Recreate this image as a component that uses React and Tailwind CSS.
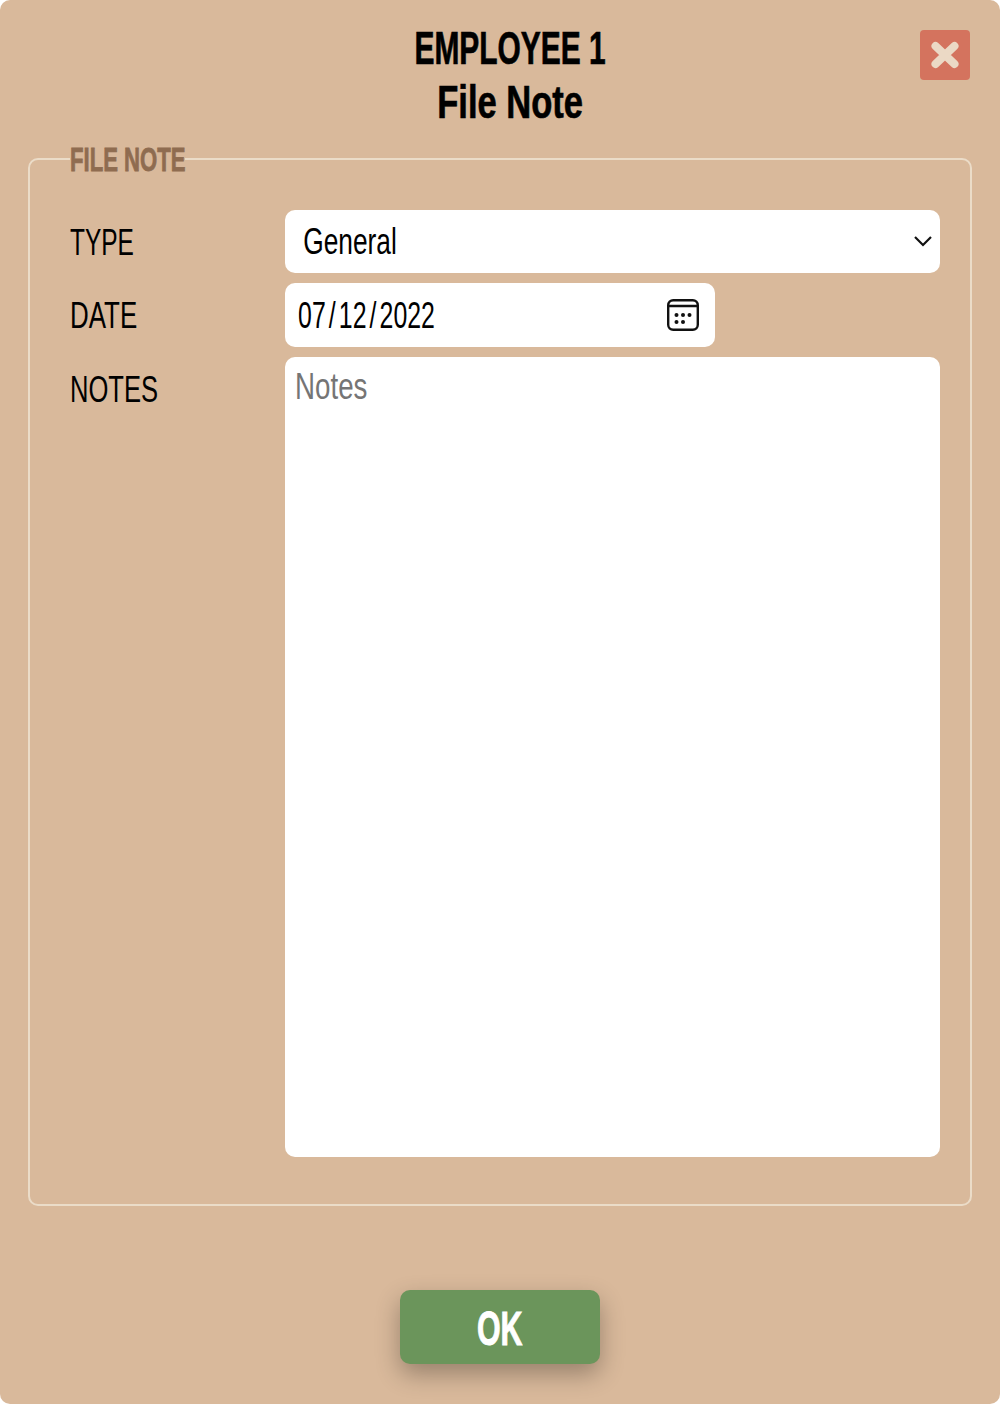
import React from 'react';

const font = { fontFamily: '"Liberation Sans", Arial, sans-serif' };

const Row = ({ label, children }) => (
    <div className="flex">
        <div className="h-[63px] w-[215px] shrink-0 text-[36px] leading-[65px] text-black whitespace-nowrap">{label}</div>
        {children}
    </div>
);

export default function App() {
    return (
        <div className="bg-white h-[1404px] w-[1000px] overflow-hidden" style={font}>
            <div className="relative h-full rounded-[10px] bg-[#d9b99b] px-[28px] pt-[21px]">
                <button className="absolute right-[30px] top-[30px] flex h-[50px] w-[50px] items-center justify-center rounded-[4px] bg-[#d4735e]">
                    <svg width="30" height="28" viewBox="0 0 30 28">
                        <path d="M5.5 5 L24.5 23 M24.5 5 L5.5 23" stroke="#ebd9c5" strokeWidth="8" strokeLinecap="round" />
                    </svg>
                </button>

                <h1 className="pl-[20px] text-center text-[46px] font-bold leading-[54px] text-black whitespace-nowrap [-webkit-text-stroke:0.7px_#000]">
                    <span className="inline-block scale-x-[0.65]">EMPLOYEE 1</span><br />
                    <span className="inline-block scale-x-[0.75]">File Note</span>
                </h1>

                <fieldset className="mt-[18px] h-[1059px] w-[944px] min-w-0 rounded-[10px] border-2 border-[#ebdcc8] pl-[40px] pr-[30px] pt-[39px]">
                    <legend className="w-[115px] text-[34px] font-bold leading-[24px] text-[#8f6c50] whitespace-nowrap [-webkit-text-stroke:0.8px_#8f6c50]">
                        <span className="inline-block origin-left scale-x-[0.65]">FILE NOTE</span>
                    </legend>
                    <div className="flex flex-col gap-[10px]">
                        <Row label={<span className="inline-block origin-left scale-x-[0.68]">TYPE</span>}>
                            <div className="relative h-[63px] w-[655px] overflow-hidden rounded-[10px] bg-white">
                                <select className="h-[63px] w-[897px] max-w-none origin-left scale-x-[0.73] appearance-none bg-transparent pl-[25px] text-[36px] text-black outline-none">
                                    <option>General</option>
                                </select>
                                <svg className="absolute right-[8px] top-[24px]" width="18" height="14" viewBox="0 0 18 14" fill="none">
                                    <path d="M1 3 L9 11 L17 3" stroke="#111" strokeWidth="2.2" />
                                </svg>
                            </div>
                        </Row>
                        <Row label={<span className="inline-block origin-left scale-x-[0.72]">DATE</span>}>
                            <div className="relative h-[64px] w-[430px] overflow-hidden rounded-[10px] bg-white">
                                <input readOnly value="07 / 12 / 2022" className="h-[64px] w-[620px] max-w-none origin-left scale-x-[0.69] bg-transparent pl-[19px] pt-[2px] text-[36px] text-black outline-none [word-spacing:-5.5px]" />
                                <svg className="absolute left-[382px] top-[16px]" width="32" height="32" viewBox="0 0 32 32" fill="none">
                                    <rect x="1.2" y="1.2" width="29.6" height="29.6" rx="5" stroke="#111" strokeWidth="2.4" />
                                    <path d="M1.2 7 H30.8" stroke="#111" strokeWidth="2.4" />
                                    <g fill="#111">
                                        <circle cx="9.5" cy="16" r="2" /><circle cx="16" cy="16" r="2" /><circle cx="22.5" cy="16" r="2" />
                                        <circle cx="9.5" cy="23" r="2" /><circle cx="16" cy="23" r="2" />
                                    </g>
                                </svg>
                            </div>
                        </Row>
                        <Row label={<span className="inline-block origin-left scale-x-[0.71]">NOTES</span>}>
                            <div className="h-[800px] w-[655px] overflow-hidden rounded-[10px] bg-white">
                                <textarea placeholder="Notes" className="h-[800px] w-[851px] max-w-none origin-left scale-x-[0.77] resize-none bg-transparent px-[13px] py-[6px] text-[36px] leading-[48px] outline-none placeholder:text-[#757575]" />
                            </div>
                        </Row>
                    </div>
                </fieldset>

                <div className="mt-[84px] flex justify-center">
                    <button className="h-[74px] w-[200px] rounded-[10px] bg-[#6b955b] pt-[2px] text-[49px] font-bold text-white shadow-[0_10px_24px_rgba(0,0,0,0.3)] [-webkit-text-stroke:1px_#fff]">
                        <span className="inline-block scale-x-[0.62]">OK</span>
                    </button>
                </div>
            </div>
        </div>
    );
}
